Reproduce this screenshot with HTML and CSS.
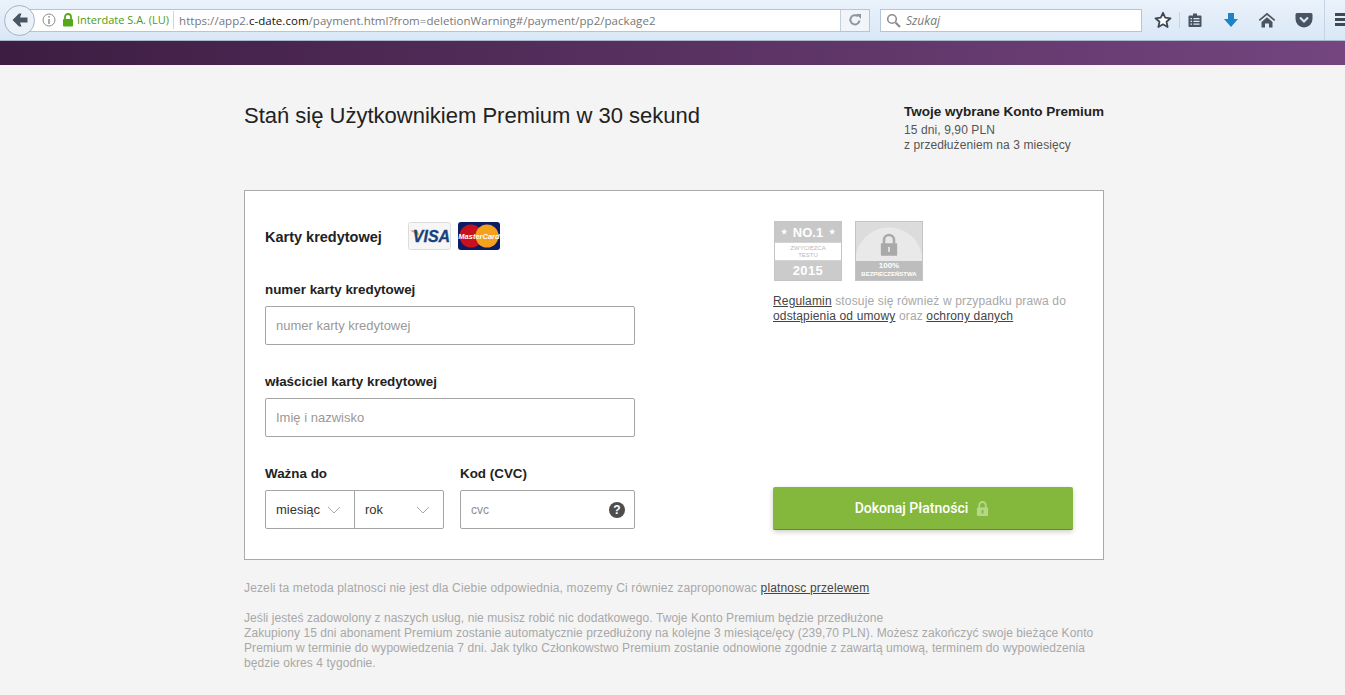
FILE: index.html
```html
<!doctype html>
<html lang="pl">
<head>
    <meta charset="UTF-8">
    <meta name="viewport" content="width=device-width, initial-scale=1.0">
    <title>Płatność</title>
    <link rel="stylesheet" href="styles.css">
</head>
<body>
    <div class="toolbar">
        <div class="back-btn">
            <svg width="18" height="18" viewBox="0 0 18 18"><path d="M1.500 9 8 2.500 10.500 2.500 9 6.500H16.500V11.500H9L10.500 15.500H8z" fill="#4a5664"/></svg>
        </div>
        <div class="urlbar">
            <svg class="info-icon" width="14" height="14" viewBox="0 0 14 14"><circle cx="7" cy="7" r="6" fill="none" stroke="#8a8a8a"/><path d="M6.300 3h1.400v1.500H6.300zM6.300 6h1.400v5H6.300z" fill="#8a8a8a"/></svg>
            <svg class="lock-icon" width="12" height="14" viewBox="0 0 12 14"><path d="M3 6V4a3 3 0 0 1 6 0v2" fill="none" stroke="#57a818" stroke-width="1.800"/><rect x="1" y="6" width="10" height="7.500" rx="1" fill="#57a818"/></svg>
            <span class="site-id">Interdate S.A. (LU)</span>
            <span class="url">https://app2.<b>c-date.com</b>/payment.html?from=deletionWarning#/payment/pp2/package2</span>
            <span class="reload">
                <svg width="14" height="14" viewBox="0 0 14 14"><path d="M11.500 7.500A4.600 4.600 0 1 1 9.800 3.200" fill="none" stroke="#8d959e" stroke-width="2"/><path d="M8 1h5v5z" fill="#8d959e"/></svg>
            </span>
        </div>
        <div class="searchbar">
            <svg width="15" height="15" viewBox="0 0 15 15"><circle cx="6" cy="6" r="4.300" fill="none" stroke="#8d8d8d" stroke-width="1.600"/><path d="m9.500 9.500 4.500 4.500" stroke="#8d8d8d" stroke-width="2.200"/></svg>
            <span>Szukaj</span>
        </div>
        <div class="tool-icons">
            <svg width="18" height="18" viewBox="0 0 18 18"><path d="M9 1.800 11.200 6.700l5.300.6-4 3.500 1.100 5.200L9 13.300 4.400 16l1.100-5.200-4-3.500 5.300-.6z" fill="#fff" stroke="#3f4955" stroke-width="1.800" stroke-linejoin="round"/></svg>
            <span class="tool-sep"></span>
            <svg width="16" height="16" viewBox="0 0 16 16"><path d="M2.500 3.500H6V1.500h4v2h3.500a1 1 0 0 1 1 1V14a1 1 0 0 1-1 1h-11a1 1 0 0 1-1-1V4.500a1 1 0 0 1 1-1z" fill="#4a5460"/><path d="M3.500 6h1.500v1.300H3.500zM6.500 6h6v1.300h-6zM3.500 8.700h1.500V10H3.500zM6.500 8.700h6V10h-6zM3.500 11.400h1.500v1.300H3.500zM6.500 11.400h6v1.300h-6z" fill="#dce9f6"/></svg>
            <svg class="tool-down" width="16" height="16" viewBox="0 0 16 16"><path d="M5 1h6v6h4l-7 8-7-8h4z" fill="#1c83c6"/></svg>
            <svg class="tool-home" width="18" height="16" viewBox="0 0 18 16"><path d="M9 .8.800 7.800l1 1.200L9 3l7.200 6 1-1.200z" fill="#4a5460"/><path d="M3.500 10 9 5.200 14.500 10v5.500h-3.500v-4H7v4H3.500z" fill="#4a5460"/></svg>
            <svg class="tool-pocket" width="18" height="16" viewBox="0 0 18 16"><path d="M2 1h14a1.500 1.500 0 0 1 1.500 1.500V7A8.500 8.500 0 0 1 .5 7V2.500A1.500 1.500 0 0 1 2 1z" fill="#4a5460"/><path d="m5 5.500 4 4 4-4" fill="none" stroke="#dce9f6" stroke-width="2"/></svg>
            <span class="tool-sep tool-sep-wide"></span>
            <div class="burger"><i></i><i></i><i></i></div>
        </div>
    </div>
    <div class="topband"></div>

    <div class="page">
        <div class="head">
            <h1>Stań się Użytkownikiem Premium w 30 sekund</h1>
            <div class="chosen">
                <h2>Twoje wybrane Konto Premium</h2>
                <p>15 dni, 9,90 PLN<br>z przedłużeniem na 3 miesięcy</p>
            </div>
        </div>

        <div class="card">
            <div class="form-col">
                <div class="pay-row">
                    <span class="pay-title">Karty kredytowej</span>
                    <svg class="logo-visa" width="43" height="28" viewBox="0 0 43 28">
                        <rect x=".5" y=".5" width="42" height="27" rx="2" fill="#f6f6f6" stroke="#dcdcdc"/>
                        <path d="M2 8.500h7.500l1.500 5z" fill="#e8a021"/>
                        <text x="23.500" y="20" text-anchor="middle" class="visa-text">VISA</text>
                    </svg>
                    <svg class="logo-mc" width="42" height="28" viewBox="0 0 42 28">
                        <rect width="42" height="28" rx="3" fill="#0b1c63"/>
                        <circle cx="13" cy="14" r="11.500" fill="#c8101e"/>
                        <circle cx="29" cy="14" r="11.500" fill="#f4a11d"/>
                        <text x="21" y="17" text-anchor="middle" class="mc-text">MasterCard</text>
                    </svg>
                </div>

                <label class="field-label first">numer karty kredytowej</label>
                <input class="text-input" type="text" placeholder="numer karty kredytowej">

                <label class="field-label">właściciel karty kredytowej</label>
                <input class="text-input" type="text" placeholder="Imię i nazwisko">

                <div class="expiry-row">
                    <div class="expiry">
                        <label class="field-label">Ważna do</label>
                        <div class="select-group">
                            <div class="fake-select month">miesiąc<svg width="14" height="8" viewBox="0 0 14 8"><path d="m1 1 6 6 6-6" fill="none" stroke="#aaa"/></svg></div>
                            <div class="fake-select year">rok<svg width="14" height="8" viewBox="0 0 14 8"><path d="m1 1 6 6 6-6" fill="none" stroke="#aaa"/></svg></div>
                        </div>
                    </div>
                    <div class="cvc">
                        <label class="field-label">Kod (CVC)</label>
                        <div class="cvc-box">
                            <span class="cvc-hint">cvc</span>
                            <span class="help">?</span>
                        </div>
                    </div>
                </div>
            </div>

            <div class="side-col">
                <div class="badges">
                    <div class="badge badge-no1">
                        <div class="no1-top"><i>★</i>NO.1<i>★</i></div>
                        <div class="no1-mid">ZWYCIĘZCA<br>TESTU</div>
                        <div class="no1-year">2015</div>
                    </div>
                    <div class="badge badge-safe">
                        <div class="safe-top">
                            <svg width="32" height="36" viewBox="0 0 32 36"><path d="M8 16V10a8 8 0 0 1 16 0v6" fill="none" stroke="#a9a9a9" stroke-width="4"/><rect x="3" y="15" width="26" height="20" rx="1" fill="#a9a9a9"/><rect x="14.500" y="21" width="3" height="8" fill="#e3e3e3"/></svg>
                        </div>
                        <div class="safe-bottom"><span>100%</span><br>BEZPIECZEŃSTWA</div>
                    </div>
                </div>
                <p class="terms"><a href="#">Regulamin</a> stosuje się również w przypadku prawa do <a href="#">odstąpienia od umowy</a> oraz <a href="#">ochrony danych</a></p>
                <button class="pay-btn">Dokonaj Płatności
                    <svg width="13" height="17" viewBox="0 0 14 17"><path d="M3.500 8V5a3.500 3.500 0 0 1 7 0v3" fill="none" stroke="#b5d78c" stroke-width="2"/><rect x="1" y="7.500" width="12" height="9" rx="1" fill="#b5d78c"/><rect x="6" y="10" width="2" height="4" fill="#84b83d"/></svg>
                </button>
            </div>
        </div>

        <p class="note">Jezeli ta metoda platnosci nie jest dla Ciebie odpowiednia, mozemy Ci równiez zaproponowac <a href="#">platnosc przelewem</a></p>
        <p class="note note-long">Jeśli jesteś zadowolony z naszych usług, nie musisz robić nic dodatkowego. Twoje Konto Premium będzie przedłużone<br>Zakupiony 15 dni abonament Premium zostanie automatycznie przedłużony na kolejne 3 miesiące/ęcy (239,70 PLN). Możesz zakończyć swoje bieżące Konto Premium w terminie do wypowiedzenia 7 dni. Jak tylko Członkowstwo Premium zostanie odnowione zgodnie z zawartą umową, terminem do wypowiedzenia będzie okres 4 tygodnie.</p>
    </div>
</body>
</html>
```

FILE: styles.css
```css
html, body {
    height: 100%;
}

body {
    margin: 0;
    overflow: hidden;
    font-family: "Liberation Sans", Arial, sans-serif;
    background-color: #f4f4f4;
    color: #222222;
}

/* browser chrome */
.toolbar {
    display: flex;
    align-items: center;
    height: 40px;
    padding-left: 4px;
    background: linear-gradient(#eaf2fb, #d9e7f6);
    border-bottom: 1px solid #a9bace;
}

.back-btn {
    display: flex;
    align-items: center;
    justify-content: center;
    flex: none;
    box-sizing: border-box;
    width: 31px;
    height: 31px;
    margin-right: -9px;
    position: relative;
    z-index: 1;
    background-color: #eaf1f8;
    border: 1px solid #a3b5c8;
    border-radius: 50%;
}

.urlbar {
    display: flex;
    align-items: center;
    width: 842px;
    height: 21px;
    background-color: #ffffff;
    border: 1px solid #b4c5d6;
    font-family: "Open Sans", sans-serif;
    font-size: 11.5px;
    white-space: nowrap;
}

.info-icon {
    margin-left: 15px;
}

.lock-icon {
    margin-left: 6px;
}

.site-id {
    margin-left: 3px;
    padding-right: 4px;
    border-right: 1px solid #cdd5dd;
    color: #4f9a12;
    font-size: 11px;
    line-height: 18px;
}

.url {
    flex: 1;
    margin-left: 5px;
    color: #777777;
    letter-spacing: 0.04px;
}

.url b {
    font-weight: 400;
    color: #111111;
}

.reload {
    display: flex;
    align-items: center;
    justify-content: center;
    width: 28px;
    height: 21px;
    background-color: #f1f5f9;
    border-left: 1px solid #c5d0dc;
}

.searchbar {
    display: flex;
    align-items: center;
    gap: 5px;
    width: 255px;
    height: 21px;
    margin-left: 10px;
    padding-left: 5px;
    background-color: #ffffff;
    border: 1px solid #b4c5d6;
    font-family: "Open Sans", sans-serif;
    font-size: 12px;
    font-style: italic;
    color: #777777;
}

.tool-icons {
    display: flex;
    align-items: center;
    align-self: stretch;
    margin-left: 12px;
}

.tool-sep {
    width: 1px;
    height: 16px;
    margin: 0 7px 0 7px;
    background-color: #c5d3e2;
}

.tool-sep-wide {
    height: 40px;
    margin: 0 10px 0 11px;
}

.tool-down {
    margin-left: 20px;
}

.tool-home {
    margin-left: 19px;
}

.tool-pocket {
    margin-left: 19px;
}

.burger {
    width: 10px;
    overflow: hidden;
}

.burger i {
    display: block;
    width: 14px;
    height: 3px;
    margin-bottom: 2px;
    background-color: #3f4955;
}

.topband {
    height: 24px;
    background: linear-gradient(90deg, #3d1d42, #74457f);
}

/* page */
.page {
    width: 860px;
    margin-left: 244px;
}

.head {
    display: flex;
    justify-content: space-between;
    height: 125px;
}

h1 {
    margin: 37px 0 0;
    font-size: 22px;
    font-weight: 400;
    line-height: 28px;
    color: #222222;
}

.chosen {
    width: 200px;
    padding-top: 39px;
}

.chosen h2 {
    margin: 0;
    font-size: 13.5px;
    line-height: 16px;
    white-space: nowrap;
    color: #222222;
}

.chosen p {
    margin: 3px 0 0;
    font-size: 12px;
    line-height: 15px;
    letter-spacing: 0.1px;
    color: #555555;
}

.card {
    display: flex;
    gap: 138px;
    box-sizing: border-box;
    height: 370px;
    padding: 30px 30px 30px 20px;
    background-color: #ffffff;
    border: 1px solid #aaaaaa;
}

.form-col {
    width: 370px;
    padding-top: 1px;
}

.pay-row {
    display: flex;
    align-items: center;
    height: 28px;
}

.pay-title {
    width: 143px;
    padding-top: 2px;
    font-size: 14.5px;
    font-weight: 700;
}

.logo-mc {
    margin-left: 7px;
}

.visa-text {
    font-family: "Liberation Sans", sans-serif;
    font-size: 16px;
    font-weight: 700;
    font-style: italic;
    fill: #17427f;
    stroke: #17427f;
    stroke-width: 0.3px;
}

.mc-text {
    font-family: "Liberation Sans", sans-serif;
    font-size: 7.500px;
    font-weight: 700;
    font-style: italic;
    fill: #ffffff;
}

.field-label {
    display: block;
    margin: 29px 0 8px;
    font-size: 13.4px;
    font-weight: 700;
    line-height: 16px;
}

.field-label.first {
    margin-top: 32px;
}

.text-input {
    display: block;
    box-sizing: border-box;
    width: 100%;
    height: 39px;
    padding: 0 10px;
    border: 1px solid #a5a5a5;
    border-radius: 2px;
    font-family: "Liberation Sans", sans-serif;
    font-size: 13px;
}

.text-input::placeholder {
    color: #999999;
}

.expiry-row {
    display: flex;
    gap: 16px;
}

.select-group {
    display: flex;
    box-sizing: border-box;
    width: 179px;
    height: 39px;
    border: 1px solid #a5a5a5;
    border-radius: 2px;
}

.fake-select {
    display: flex;
    align-items: center;
    justify-content: space-between;
    box-sizing: border-box;
    padding: 0 13px 0 10px;
    font-size: 13px;
    color: #333333;
}

.month {
    width: 89px;
    padding-right: 13px;
    border-right: 1px solid #a5a5a5;
}

.year {
    flex: 1;
}

.cvc {
    width: 175px;
}

.cvc-box {
    display: flex;
    align-items: center;
    justify-content: space-between;
    box-sizing: border-box;
    height: 39px;
    padding: 0 9px 0 10px;
    border: 1px solid #a5a5a5;
    border-radius: 2px;
}

.cvc-hint {
    font-size: 12px;
    color: #8e8e8e;
}

.help {
    width: 16px;
    height: 16px;
    border-radius: 50%;
    background-color: #4d4d4d;
    color: #ffffff;
    font-size: 12px;
    font-weight: 700;
    line-height: 16px;
    text-align: center;
}

.side-col {
    display: flex;
    flex-direction: column;
    width: 300px;
}

.badges {
    display: flex;
    gap: 13px;
    margin-left: 1px;
}

.badge {
    box-sizing: border-box;
    width: 68px;
    height: 60px;
    border: 1px solid #c4c4c4;
    background-color: #dcdcdc;
    text-align: center;
    font-weight: 700;
    overflow: hidden;
}

.no1-top {
    display: flex;
    align-items: center;
    justify-content: center;
    gap: 6px;
    height: 20px;
    background-color: #c8c8c8;
    color: #ffffff;
    font-size: 13px;
}

.no1-top i {
    font-style: normal;
    font-size: 7px;
}

.no1-mid {
    height: 19px;
    padding-top: 2px;
    box-sizing: border-box;
    background-color: #ffffff;
    border-top: 1px solid #d4d4d4;
    border-bottom: 1px solid #d4d4d4;
    color: #b8b8b8;
    font-size: 6px;
    font-weight: 400;
    line-height: 7px;
}

.no1-year {
    height: 19px;
    background-color: #cbcbcb;
    color: #ffffff;
    font-size: 13px;
    letter-spacing: 0.4px;
    line-height: 19px;
}

.safe-top {
    height: 39px;
    padding-top: 11px;
    box-sizing: border-box;
    background: radial-gradient(circle at 50% 100%, #e9e9e9 33px, #dcdcdc 34px);
}

.safe-top svg {
    width: 20px;
    height: 24px;
}

.safe-bottom {
    height: 19px;
    padding-top: 1px;
    box-sizing: border-box;
    background-color: #bdbdbd;
    color: #ffffff;
    font-size: 6px;
    line-height: 8px;
}

.safe-bottom span {
    font-size: 8px;
}

.terms {
    margin: 13px 0 0;
    font-size: 12px;
    line-height: 15px;
    letter-spacing: 0.15px;
    color: #a8a8a8;
}

.terms a, .note a {
    color: #444444;
}

.pay-btn {
    display: flex;
    align-items: center;
    justify-content: center;
    gap: 8px;
    flex: none;
    box-sizing: border-box;
    width: 300px;
    height: 43px;
    margin-top: auto;
    margin-bottom: -1px;
    padding: 0 2px 0 0;
    background-color: #84b83d;
    color: #ffffff;
    border: none;
    border-bottom: 1px solid #5f8f28;
    border-radius: 2px;
    box-shadow: 0 2px 5px rgba(0, 0, 0, 0.2);
    font-family: "Roboto", sans-serif;
    font-size: 14px;
    font-weight: 500;
}

.note {
    margin: 21px 0 0;
    font-size: 12px;
    line-height: 15px;
    letter-spacing: 0.15px;
    color: #a8a8a8;
}

.note-long {
    margin-top: 15px;
    letter-spacing: 0.07px;
}
```
